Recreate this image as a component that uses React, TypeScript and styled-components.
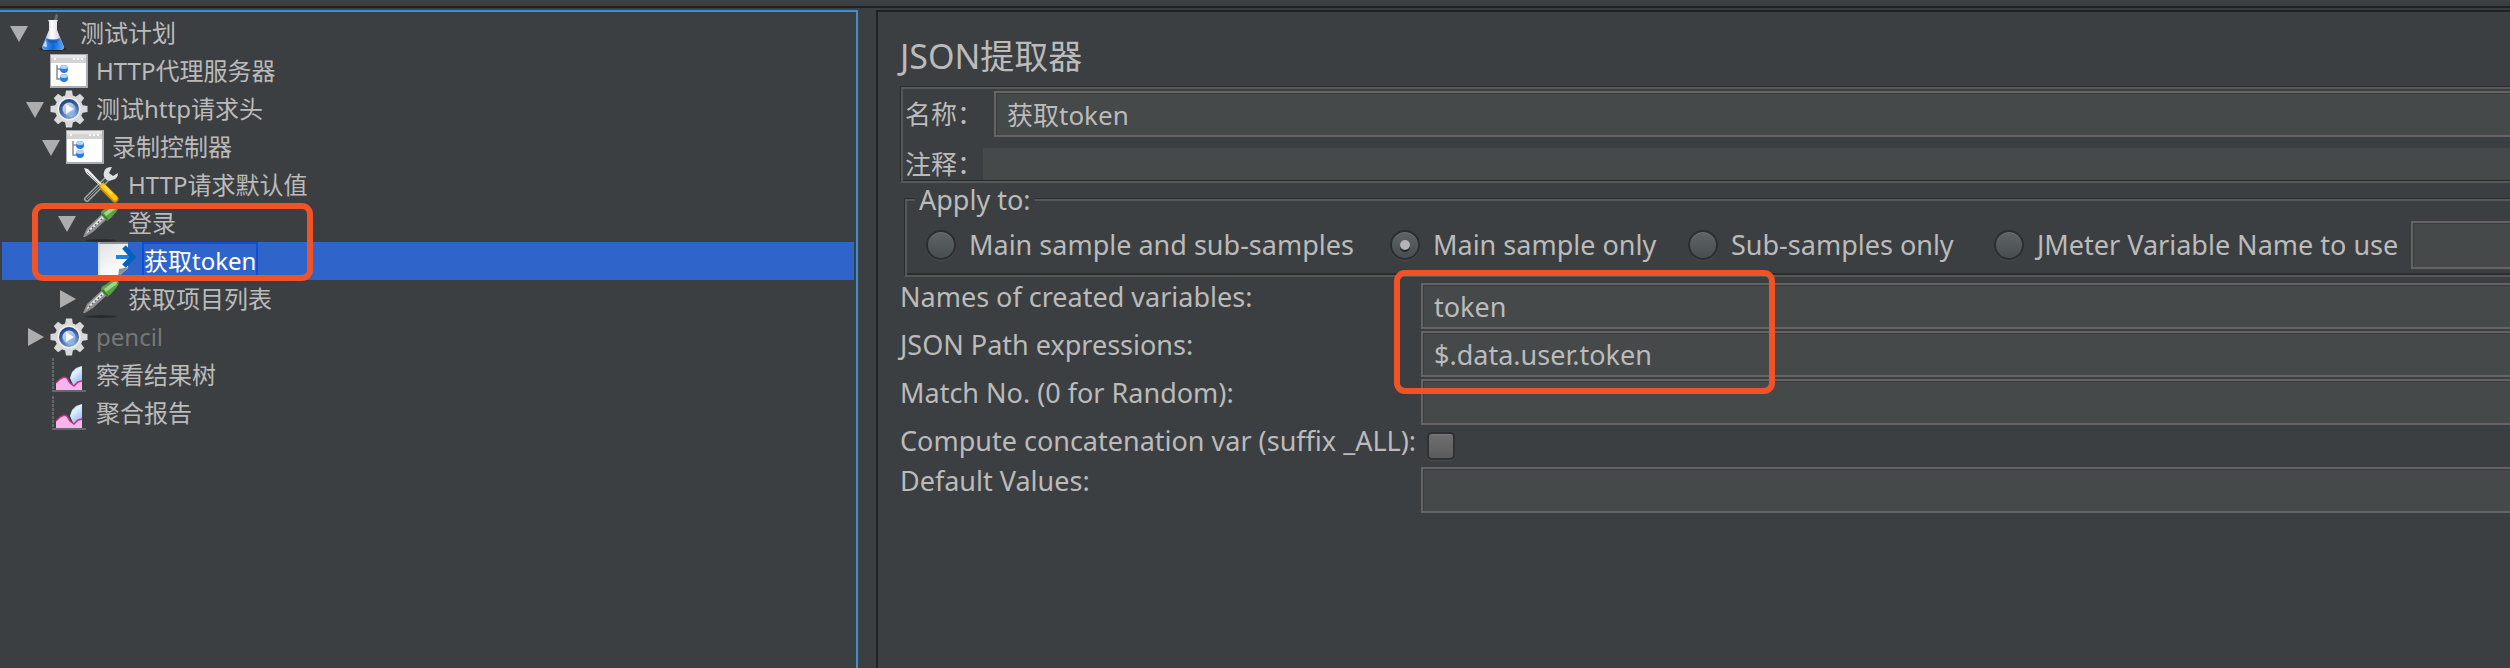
import React, { useId, useState } from 'react';
import styled, { createGlobalStyle, css } from 'styled-components';

const color = {
  bg: '#3c3f41',
  field: '#45494a',
  text: '#bbbbbb',
  muted: '#777777',
  edge: '#646464',
  dark: '#2a2c2e',
  light: '#555859',
  seam: '#1f2123',
  focus: '#3d8fd1',
  select: '#2f65ca',
  mark: '#f05326',
};

const GlobalStyle = createGlobalStyle`
  *, *::before, *::after { box-sizing: border-box; }
  body {
    margin: 0;
    background: ${color.bg};
    color: ${color.text};
    font-family: "Noto Sans", "Noto Sans CJK SC", sans-serif;
  }
`;

const Page = styled.div`
  display: flex;
  flex-direction: column;
  min-height: 100vh;
  overflow: hidden;
`;

const ToolbarEdge = styled.div`
  height: 10px;
  border-bottom: 2px solid ${color.bg};
  box-shadow: inset 0 -2px ${color.seam};
`;

const Split = styled.div`
  display: flex;
  flex: 1;
  gap: 18px;
`;

const TreePane = styled.nav`
  flex: 0 0 858px;
  padding: 2px;
  border-top: 2px solid ${color.focus};
  border-right: 2px solid ${color.focus};
`;

const Tree = styled.ul`
  margin: 0;
  padding: 0;
  list-style: none;
  font-size: 24px;
  line-height: 34px;
`;

const Row = styled.li<{ $depth: number; $selected?: boolean; $disabled?: boolean }>`
  position: relative;
  display: flex;
  align-items: center;
  height: 38px;
  padding-left: ${(p) => 8 + p.$depth * 16}px;
  background: ${(p) => (p.$selected ? color.select : 'transparent')};
  color: ${(p) => (p.$selected ? '#ffffff' : p.$disabled ? color.muted : color.text)};
`;

const Toggle = styled.button`
  display: block;
  width: 18px;
  height: 18px;
  margin-right: 6px;
  padding: 0;
  border: 0;
  background: none;
  svg { display: block; }
`;

const ToggleSpace = styled.span`
  width: 24px;
`;

const IconBox = styled.span`
  width: 38px;
  height: 38px;
  margin-right: 6px;
  svg { display: block; }
`;

const NodeLabel = styled.span<{ $selected?: boolean }>`
  height: 38px;
  border: 2px solid ${(p) => (p.$selected ? '#0b50dc' : 'transparent')};
  white-space: nowrap;
`;

const Marker = styled.div`
  position: absolute;
  z-index: 2;
  border: 6px solid ${color.mark};
  border-radius: 11px;
  pointer-events: none;
`;

const TreeMarker = styled(Marker)`
  top: -1px;
  left: 30px;
  width: 281px;
  height: 78px;
`;

const FormMarker = styled(Marker)`
  top: -13px;
  left: 494px;
  width: 381px;
  height: 124px;
`;

const EditorPane = styled.main`
  flex: 1;
  min-width: 0;
  padding: 22px 0 0 22px;
  border-top: 2px solid ${color.seam};
  border-left: 2px solid ${color.seam};
  font-size: 27px;
`;

const Title = styled.h1`
  margin: 0 0 8px;
  font-size: 34px;
  font-weight: 400;
  line-height: 44px;
`;

const etched = css`
  border: 0 solid ${color.dark};
  border-width: 1px 0 2px 1px;
  border-bottom-color: ${color.light};
`;

const HeaderGroup = styled.section`
  ${etched}
  display: flex;
  flex-direction: column;
  gap: 11px;
  padding: 4px 0 1px 4px;
  box-shadow: inset 2px 2px ${color.light}, inset 0 -1px ${color.dark};
  font-size: 26px;
`;

const HeaderRow = styled.div`
  display: flex;
  align-items: center;
`;

const HeaderLabel = styled.label<{ $width: number }>`
  flex: 0 0 ${(p) => p.$width}px;
  line-height: 32px;
  white-space: nowrap;
`;

const TextField = styled.input<{ $height?: number }>`
  display: block;
  flex: 1;
  width: 100%;
  min-width: 0;
  height: ${(p) => p.$height ?? 46}px;
  padding: 0 11px;
  border: 2px solid ${color.edge};
  border-right: 0;
  border-radius: 0;
  outline: 0;
  background: ${color.field};
  box-shadow: inset 1px 1px #3a3c3d;
  color: inherit;
  font: inherit;
`;

const PlainField = styled(TextField)`
  height: 32px;
  border: 0;
  box-shadow: none;
`;

const ApplyGroup = styled.fieldset`
  ${etched}
  min-width: 0;
  margin: 0 0 6px 4px;
  padding: 8px 0 6px 21px;
  box-shadow: inset 2px 2px ${color.light}, inset 0 -2px ${color.dark};
`;

const ApplyLegend = styled.legend`
  position: relative;
  margin-left: -11px;
  padding: 4px 4px 0;
  background: ${color.bg};
  line-height: 26px;
`;

const ApplyOptions = styled.div`
  display: grid;
  grid-template-columns: 464px 298px 306px 417px 1fr;
  align-items: center;
`;

const Option = styled.label`
  display: flex;
  align-items: center;
  gap: 13px;
  line-height: 32px;
  white-space: nowrap;
`;

const Radio = styled.input`
  appearance: none;
  display: grid;
  place-items: center;
  width: 30px;
  height: 30px;
  margin: 0;
  border: 2px solid #2b2d2e;
  border-radius: 50%;
  background: linear-gradient(#5e6365, #494e51);
  box-shadow: inset 0 1px #6c7072, 0 1px 1px #4c4f51;
  &:checked::before {
    content: '';
    width: 10px;
    height: 10px;
    border-radius: 50%;
    background: #b4b4b4;
    box-shadow: 0 2px #1f2122;
  }
`;

const Fields = styled.form`
  position: relative;
  display: grid;
  grid-template-columns: 521px 1fr;
  row-gap: 2px;
`;

const FieldLabel = styled.label`
  line-height: 28px;
  white-space: nowrap;
`;

const CheckBox = styled.input`
  appearance: none;
  width: 28px;
  height: 28px;
  margin: 5px 6px;
  border: 2px solid #2e3031;
  border-radius: 5px;
  background: linear-gradient(#6f6f6f, #5c5c5c);
  box-shadow: inset 0 1px #7a7a7a, 0 1px 1px #4c4f51;
  &:checked { background: #a0a0a0; }
`;

const FlaskIcon = () => (
  <svg width="38" height="38" viewBox="0 0 38 38" aria-hidden="true">
    <defs>
      <linearGradient id="glass" x1="0" x2="1">
        <stop offset="0" stopColor="#9fa4b4" />
        <stop offset=".45" stopColor="#ffffff" />
        <stop offset="1" stopColor="#b9bccb" />
      </linearGradient>
      <linearGradient id="liquid" x1="0" x2="1">
        <stop offset="0" stopColor="#5da2ee" />
        <stop offset=".5" stopColor="#0a67dd" />
        <stop offset="1" stopColor="#63a8f2" />
      </linearGradient>
    </defs>
    <ellipse cx="19" cy="35" rx="14" ry="2" fill="#26292c" />
    <path d="M20 6l2-6 2 1-1 5z" fill="#6d7072" />
    <path d="M14 6h10l-1 2v8l7 17q0 3-4 3H12q-4 0-4-3l7-17V8z" fill="url(#glass)" />
    <path d="M12 24q7 3 14 0l4 9q0 3-4 3H12q-4 0-4-3z" fill="url(#liquid)" />
    <path d="M13 25q6 3 12 0l-2 4h-8z" fill="#1d4f9c" opacity=".6" />
    <path d="M9 32l3-6 1 7z" fill="#c9defa" />
  </svg>
);

const WindowIcon = () => (
  <svg width="38" height="38" viewBox="0 0 38 38" aria-hidden="true">
    <rect y="2" width="38" height="34" fill="#a9adb1" />
    <rect x="1" y="3" width="35" height="31" fill="#ffffff" />
    <rect x="1" y="3" width="35" height="8" fill="#d3d3d3" />
    <rect x="1" y="3" width="35" height="3" fill="#e6e6e6" />
    <path d="M4 7h2M23 7h2M27 7h2M31 7h2" stroke="#f8f8f8" strokeWidth="2" />
    <path d="M7 13v14h4M7 17h4" fill="none" stroke="#8c8c8c" strokeWidth="1.5" />
    <circle cx="14" cy="17" r="4" fill="#2a7be0" />
    <circle cx="14" cy="26" r="4" fill="#2a7be0" />
    <path d="M10 16q1-3 4-3t4 3q-4 2-8 0zM10 25q1-3 4-3t4 3q-4 2-8 0z" fill="#b5d6fb" />
  </svg>
);

const GearIcon = () => (
  <svg width="38" height="38" viewBox="0 0 38 38" aria-hidden="true">
    <defs>
      <radialGradient id="hub" cx=".6" cy=".75" r=".75">
        <stop offset="0" stopColor="#a5c8f2" />
        <stop offset=".6" stopColor="#456db0" />
        <stop offset="1" stopColor="#1d3f7c" />
      </radialGradient>
      <linearGradient id="play" x1="0" y1="0" x2="1" y2="1">
        <stop offset="0" stopColor="#d5deea" />
        <stop offset="1" stopColor="#7fa3dc" />
      </linearGradient>
    </defs>
    <g fill="#d9d9d9">
      {[0, 45, 90, 135].map((turn) => (
        <path key={turn} d="M16 0.500h6l1 6v25l-1 6h-6l-1-6v-25z" transform={`rotate(${turn} 19 19)`} />
      ))}
      <circle cx="19" cy="19" r="14" />
    </g>
    <circle cx="19" cy="19" r="11.500" fill="#efefef" />
    <circle cx="19" cy="19" r="10" fill="url(#hub)" />
    <circle cx="19" cy="19" r="6.500" fill="url(#play)" />
    <path d="M16 14l8 5-8 5z" fill="#f4f7fb" />
  </svg>
);

const ToolsIcon = () => (
  <svg width="38" height="38" viewBox="0 0 38 38" aria-hidden="true">
    <path d="M5 33L26 12" stroke="#a2a4a6" strokeWidth="6" strokeLinecap="round" />
    <path d="M5 33L24 14" stroke="#44484a" strokeWidth="3" strokeLinecap="round" />
    <path d="M5 33L22 16" stroke="#8b8e90" strokeWidth="1" />
    <path d="M30 1q-7 0-8 5-1 4 1 6 2 4 7 2 6-1 6-7l-5 3-4-3z" fill="#dfe1e2" />
    <path d="M2 2l4 1 14 15-2 2L4 7z" fill="#e9e9e9" />
    <path d="M5 6l13 13" stroke="#9b9b9b" strokeWidth="1" />
    <path d="M21 21l12 12" stroke="#c98f04" strokeWidth="7" strokeLinecap="round" />
    <path d="M21 20l12 12" stroke="#fcc70d" strokeWidth="5" strokeLinecap="round" />
    <path d="M22 20l8 8" stroke="#fde37a" strokeWidth="1.500" />
  </svg>
);

const DropperIcon = () => (
  <svg width="38" height="38" viewBox="0 0 38 38" aria-hidden="true">
    <ellipse cx="19" cy="36.500" rx="16" ry="1.500" fill="#292c2e" />
    <path d="M1 33l4-9L20 10l5 5-14 13-8 5z" fill="#8d8f90" />
    <path d="M4 30l3-5L20 12l2 3-13 11z" fill="#e9e9e9" />
    <path d="M7 27L21 14" stroke="#5d6062" strokeWidth="1.500" strokeDasharray="2 2" />
    <path d="M19 10q0-4 4-5l6-4q5-3 7 0 2 3-2 7l-5 6-4 3z" fill="#5da145" />
    <path d="M22 9l8-6q3-2 5-1 0 3-3 4l-8 6z" fill="#9fd883" />
    <path d="M20 10l6 6" stroke="#3a7527" strokeWidth="1.500" />
  </svg>
);

const ExtractIcon = () => (
  <svg width="38" height="38" viewBox="0 0 38 38" aria-hidden="true">
    <defs>
      <linearGradient id="sheet" x1="0" y1="0" x2=".6" y2="1">
        <stop offset="0" stopColor="#dfe3e3" />
        <stop offset="1" stopColor="#ffffff" />
      </linearGradient>
    </defs>
    <path d="M0 0h30v26L20 35H0z" fill="url(#sheet)" />
    <path d="M0 1h30" stroke="#8d9598" strokeWidth="2" />
    <path d="M1 0v35" stroke="#c4cccf" strokeWidth="1" />
    <path d="M31 25L20 35l1-8z" fill="#8a9296" />
    <path d="M18 15h16" stroke="#2a80d8" strokeWidth="4" />
    <path d="M26 5l9 10-9 9" fill="none" stroke="#0660bd" strokeWidth="5" />
  </svg>
);

const ChartIcon = () => (
  <svg width="38" height="38" viewBox="0 0 38 38" aria-hidden="true">
    <defs>
      <linearGradient id="sky" x1="0" y1="0" x2=".5" y2="1">
        <stop offset="0" stopColor="#6fa8ee" />
        <stop offset=".4" stopColor="#e4f2ff" />
        <stop offset="1" stopColor="#8dbcf4" />
      </linearGradient>
    </defs>
    <path d="M3 2v33" stroke="#65686a" strokeWidth="2" strokeDasharray="3 1" />
    <path d="M2 35h34" stroke="#65686a" strokeWidth="2" />
    <path d="M20 22l2-6 4-4 6-2v18l-8 3z" fill="url(#sky)" />
    <path d="M6 34v-7l4-4 4-2 3 1 3 5 4 3 4-4 4-1v9z" fill="#f8b4ec" />
    <path d="M6 27l4-4 4-2 3 1 3 5 4 3 4-4 4-1" fill="none" stroke="#c22f83" strokeWidth="1.500" />
  </svg>
);

type TreeNode = {
  name: string;
  depth: number;
  Icon: React.ComponentType;
  open?: boolean;
  selected?: boolean;
  disabled?: boolean;
  marked?: boolean;
};

const nodes: TreeNode[] = [
  { name: '测试计划', depth: 0, Icon: FlaskIcon, open: true },
  { name: 'HTTP代理服务器', depth: 1, Icon: WindowIcon },
  { name: '测试http请求头', depth: 1, Icon: GearIcon, open: true },
  { name: '录制控制器', depth: 2, Icon: WindowIcon, open: true },
  { name: 'HTTP请求默认值', depth: 3, Icon: ToolsIcon },
  { name: '登录', depth: 3, Icon: DropperIcon, open: true, marked: true },
  { name: '获取token', depth: 4, Icon: ExtractIcon, selected: true },
  { name: '获取项目列表', depth: 3, Icon: DropperIcon, open: false },
  { name: 'pencil', depth: 1, Icon: GearIcon, open: false, disabled: true },
  { name: '察看结果树', depth: 1, Icon: ChartIcon },
  { name: '聚合报告', depth: 1, Icon: ChartIcon },
];

function TreeRow({ node }: { node: TreeNode }) {
  const { name, depth, Icon, open, selected, disabled, marked } = node;
  return (
    <Row
      role="treeitem"
      aria-level={depth + 1}
      aria-expanded={open}
      aria-selected={!!selected}
      $depth={depth}
      $selected={selected}
      $disabled={disabled}
    >
      {open === undefined ? (
        <ToggleSpace />
      ) : (
        <Toggle type="button" aria-label={name}>
          <svg width="18" height="18" viewBox="0 0 18 18" aria-hidden="true">
            <path d={open ? 'M0 2h18L9 18z' : 'M2 0l16 9-16 9z'} fill="#adadad" />
          </svg>
        </Toggle>
      )}
      <IconBox>
        <Icon />
      </IconBox>
      <NodeLabel $selected={selected}>{name}</NodeLabel>
      {marked && <TreeMarker />}
    </Row>
  );
}

const scopes = ['Main sample and sub-samples', 'Main sample only', 'Sub-samples only', 'JMeter Variable Name to use'];

function LabeledField({ label, value = '' }: { label: string; value?: string }) {
  const id = useId();
  return (
    <>
      <FieldLabel htmlFor={id}>{label}</FieldLabel>
      <TextField id={id} defaultValue={value} />
    </>
  );
}

export default function App() {
  const [scope, setScope] = useState(scopes[1]);

  return (
    <>
      <GlobalStyle />
      <Page>
        <ToolbarEdge />
        <Split>
          <TreePane>
            <Tree role="tree">
              {nodes.map((node) => (
                <TreeRow key={node.name} node={node} />
              ))}
            </Tree>
          </TreePane>
          <EditorPane>
            <Title>JSON提取器</Title>
            <HeaderGroup>
              <HeaderRow>
                <HeaderLabel htmlFor="name" $width={89}>名称：</HeaderLabel>
                <TextField id="name" defaultValue="获取token" />
              </HeaderRow>
              <HeaderRow>
                <HeaderLabel htmlFor="comment" $width={77}>注释：</HeaderLabel>
                <PlainField id="comment" />
              </HeaderRow>
            </HeaderGroup>
            <ApplyGroup>
              <ApplyLegend>Apply to:</ApplyLegend>
              <ApplyOptions>
                {scopes.map((item) => (
                  <Option key={item}>
                    <Radio type="radio" name="scope" checked={scope === item} onChange={() => setScope(item)} />
                    {item}
                  </Option>
                ))}
                <TextField $height={48} aria-label={scopes[3]} />
              </ApplyOptions>
            </ApplyGroup>
            <Fields>
              <LabeledField label="Names of created variables:" value="token" />
              <LabeledField label="JSON Path expressions:" value="$.data.user.token" />
              <LabeledField label="Match No. (0 for Random):" />
              <FieldLabel htmlFor="concat">Compute concatenation var (suffix _ALL):</FieldLabel>
              <CheckBox id="concat" type="checkbox" />
              <LabeledField label="Default Values:" />
              <FormMarker />
            </Fields>
          </EditorPane>
        </Split>
      </Page>
    </>
  );
}
